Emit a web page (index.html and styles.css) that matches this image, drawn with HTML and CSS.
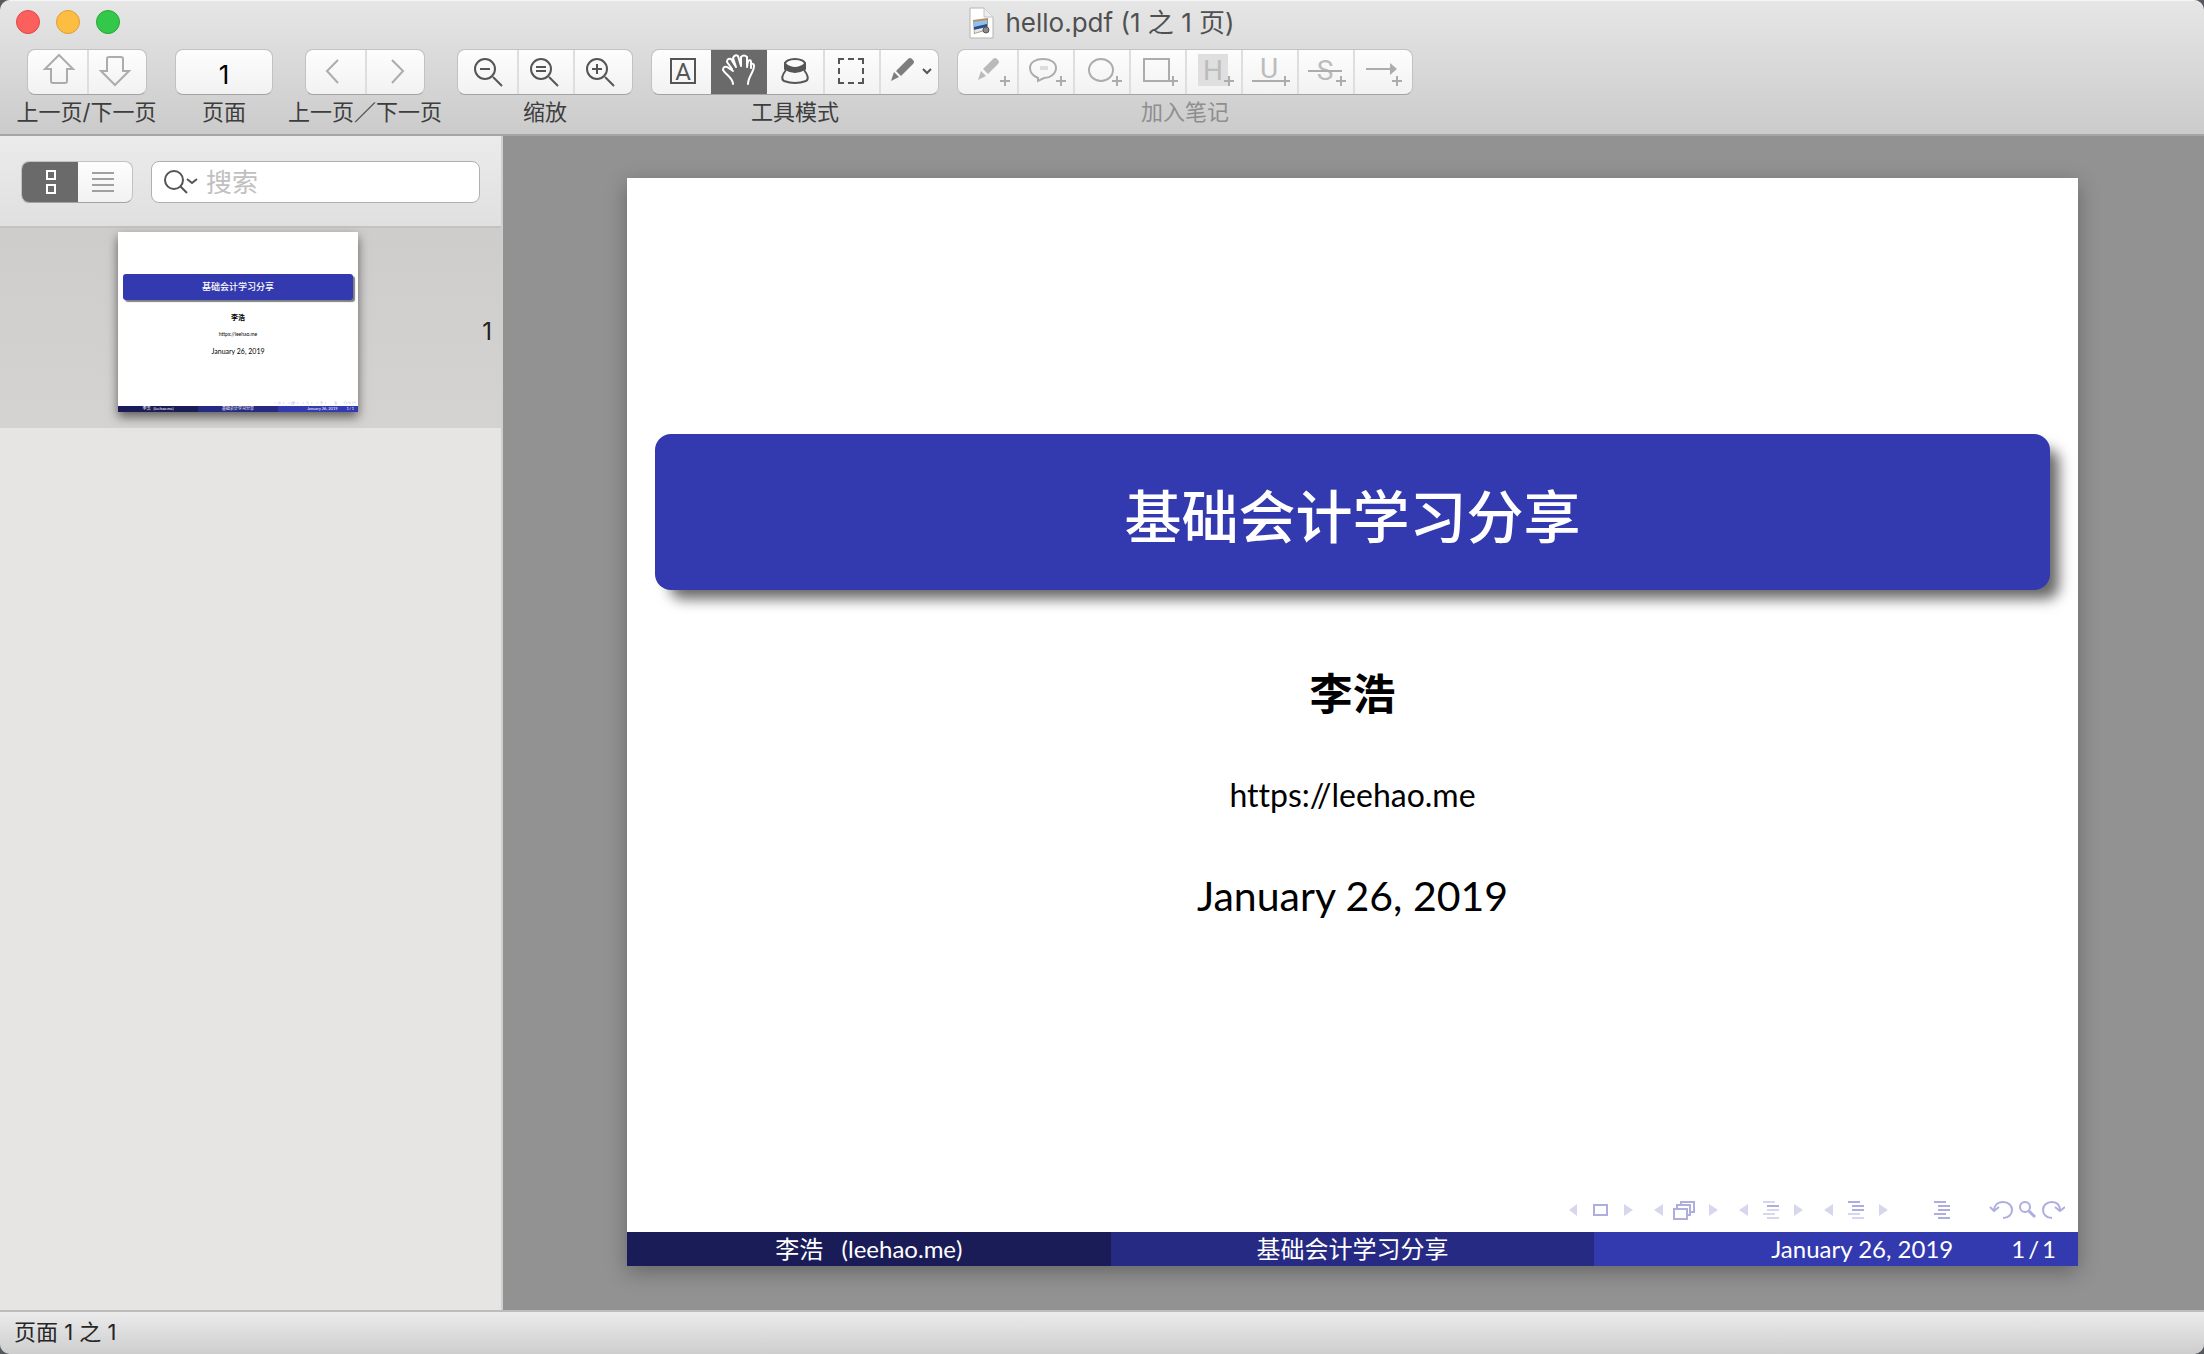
FILE: index.html
```html
<!DOCTYPE html>
<html lang="zh-CN">
<head>
<meta charset="utf-8">
<title>hello.pdf</title>
<link rel="stylesheet" href="styles.css">
</head>
<body>
<div class="window">
  <header class="chrome">
    <div class="titlebar">
      <div class="lights">
        <button class="light light-close" aria-label="关闭"></button>
        <button class="light light-min" aria-label="最小化"></button>
        <button class="light light-zoom" aria-label="缩放窗口"></button>
      </div>
      <h1 class="title">
        <svg width="26" height="32" viewBox="0 0 26 32"><path d="M1 1h14l9 9v21H1z" fill="#fff" stroke="#b4b4b4"/><path d="M15 1v9h9" fill="#eee" stroke="#c4c4c4"/><path d="M4 13l15-2v12l-14 4z" fill="#b98d62"/><path d="M4 15l14-2v5l-13 3z" fill="#8fc1ee"/><path d="M5 20l13-3v3l-13 3z" fill="#2c4a8c"/><path d="M5 23l13-3v2l-12 4z" fill="#dfe8f0"/><circle cx="17" cy="23" r="3" fill="#8a8a8a" stroke="#555"/></svg>
        <span>hello.pdf (1 之 1 页)</span>
      </h1>
    </div>
    <div class="toolbar">
      <div class="tool tool-pages">
        <div class="segments">
          <button disabled aria-label="上一页"><svg width="60" height="46"><path d="M32 6 46 20H40V32q0 2-2 2H26q-2 0-2-2V20H18Z"/></svg></button>
          <button disabled aria-label="下一页"><svg width="60" height="46"><path d="M28 36 42 22H36V10q0-2-2-2H22q-2 0-2 2V22H14Z"/></svg></button>
        </div>
        <span class="caption">上一页/下一页</span>
      </div>
      <div class="tool">
        <input class="page-input" id="page" value="1">
        <label class="caption" for="page">页面</label>
      </div>
      <div class="tool tool-history">
        <div class="segments">
          <button disabled aria-label="后退"><svg width="60" height="46"><path d="M33 11 22 22 33 34"/></svg></button>
          <button disabled aria-label="前进"><svg width="60" height="46"><path d="M27 11 38 22 27 34"/></svg></button>
        </div>
        <span class="caption">上一页／下一页</span>
      </div>
      <div class="tool">
        <div class="segments">
          <button aria-label="缩小"><svg width="60" height="46"><circle cx="28" cy="20" r="10"/><path d="M36 28 45 37M23 20h10"/></svg></button>
          <button aria-label="实际大小"><svg width="56" height="46"><circle cx="24" cy="20" r="10"/><path d="M32 28 41 37M19 18h10M19 22h10"/></svg></button>
          <button aria-label="放大"><svg width="60" height="46"><circle cx="24" cy="20" r="10"/><path d="M32 28 41 37M19 20h10M24 15v10"/></svg></button>
        </div>
        <span class="caption">缩放</span>
      </div>
      <div class="tool">
        <div class="segments">
          <button aria-label="文本工具"><svg width="60" height="46"><path d="M20 10h24v24H20z"/><text x="32" y="31" class="glyph">A</text></svg></button>
          <button class="on" aria-label="滚动工具"><svg width="56" height="46" stroke-linecap="round"><path d="M22 35C22 29 15 26 12 21q0-4 4-3l6 4M21 20 16 13q0-4 4-3l5 8M25 18 22 9q2-4 5-2l3 10M30 17V8q3-3 6 0v9M36 18l1-6q3-2 3 1v6M40 15q3-1 3 2c0 6-6 11-6 18"/></svg></button>
          <button aria-label="放大镜工具"><svg width="56" height="46"><ellipse cx="28" cy="15" rx="10" ry="5"/><path d="M18 15v5q10 6 20 0v-5q-10 8-20 0z" fill="#555"/><path d="M19 21c-4 5-5 9-2 11q11 4 22 0c3-2 2-6-2-11"/></svg></button>
          <button aria-label="选择工具"><svg width="56" height="46"><path d="M16 15v-5h5M25 10h6M35 10h5v5M40 19v6M40 29v5h-5M31 34h-6M21 34h-5v-5M16 25v-6"/></svg></button>
          <button aria-label="笔记工具"><svg width="60" height="46"><g class="pen"><path d="M17 22 29 10q2-2 4 0l1 1q2 2 0 4L22 27z"/><path d="M15 23l5 5-8 4z"/></g><path d="M44 20l4 4 4-4"/></svg></button>
        </div>
        <span class="caption">工具模式</span>
      </div>
      <div class="tool tool-off">
        <div class="segments">
          <button disabled aria-label="手绘"><svg width="60" height="46"><g class="pen"><path d="M26 20 36 10q2-2 4 0l1 1q2 2 0 4L31 25z"/><path d="M24 22l5 5-8 4z"/></g><path d="M43 32h10M48 27v10"/></svg></button>
          <button disabled aria-label="批注"><svg width="56" height="46"><path d="M21 29c-5-2-8-5-8-10 0-6 6-9 13-9s13 3 13 9-6 10-12 10l-6 3z"/><path d="M23 19h8" class="faint"/><path d="M39 32h10M44 27v10"/></svg></button>
          <button disabled aria-label="椭圆"><svg width="56" height="46"><ellipse cx="28" cy="21" rx="12" ry="11"/><path d="M39 32h10M44 27v10"/></svg></button>
          <button disabled aria-label="矩形"><svg width="56" height="46"><path d="M15 10h25v22H15z"/><path d="M39 32h10M44 27v10"/></svg></button>
          <button disabled aria-label="高亮"><svg width="56" height="46"><path class="shade" d="M13 5h30v32H13z"/><text x="28" y="31" class="glyph glyph-big">H</text><path d="M39 32h10M44 27v10"/></svg></button>
          <button disabled aria-label="下划线"><svg width="56" height="46"><text x="28" y="29" class="glyph glyph-big">U</text><path d="M11 32h38M44 27v10"/></svg></button>
          <button disabled aria-label="删除线"><svg width="56" height="46"><text x="28" y="31" class="glyph glyph-big">S</text><path d="M11 22h34M39 32h10M44 27v10"/></svg></button>
          <button disabled aria-label="箭头"><svg width="60" height="46"><path d="M13 20h26"/><path d="M37 14l7 6-7 6z" class="solid"/><path d="M39 32h10M44 27v10"/></svg></button>
        </div>
        <span class="caption">加入笔记</span>
      </div>
    </div>
  </header>

  <main class="body">
    <aside class="sidebar">
      <div class="sidebar-head">
        <div class="segments segments-small">
          <button class="on" aria-label="缩略图"><svg width="57" height="42"><path d="M26 10h8v8h-8zM26 24h8v8h-8z"/></svg></button>
          <button aria-label="目录"><svg width="55" height="42"><path class="lines" d="M14 12h22M14 18h22M14 24h22M14 30h22"/></svg></button>
        </div>
        <label class="search">
          <svg width="34" height="26" viewBox="0 0 34 26"><circle cx="10" cy="11" r="9"/><path d="M16 17 23 24M23 10l5 4 5-4"/></svg>
          <input type="search" placeholder="搜索" aria-label="搜索">
        </label>
      </div>
      <div class="thumb-row">
        <article class="slide slide-thumb">
          <div class="banner">基础会计学习分享</div>
          <p class="author">李浩</p>
          <p class="link">https://leehao.me</p>
          <p class="date">January 26, 2019</p>
          <div class="nav"><svg width="82" height="4" viewBox="0 0 496 24"><use href="#beamer-nav"/></svg></div>
          <footer class="foot"><span>李浩&nbsp;&nbsp; (leehao.me)</span><span>基础会计学习分享</span><span class="foot-date"><span>January 26, 2019</span><span>1&thinsp;/&thinsp;1</span></span></footer>
        </article>
        <span class="thumb-number">1</span>
      </div>
    </aside>

    <section class="viewer">
      <article class="slide slide-full">
        <h2 class="banner">基础会计学习分享</h2>
        <p class="author">李浩</p>
        <p class="link"><a href="https://leehao.me">https://leehao.me</a></p>
        <p class="date">January 26, 2019</p>
        <div class="nav">
          <svg width="496" height="24" viewBox="0 0 496 24">
            <g id="beamer-nav" fill="none" stroke="#adadde" stroke-width="2">
              <path fill="#d6d6ef" stroke="none" d="M8 6v12L0 12zM55 6v12l9-6zM94 6v12l-9-6zM140 6v12l9-6zM179 6v12l-9-6zM225 6v12l9-6zM264 6v12l-9-6zM310 6v12l9-6z"/>
              <path d="M25 7h13v10H25zM105 11h13v10h-13zM108 10V7h13v10h-3M112 6V4h13v10h-4"/>
              <path stroke="#d6d6ef" d="M194 4h12M198 12h12M194 16h12M198 20h12M279 16h12M283 20h12"/>
              <path d="M198 8h12M279 4h12M283 8h12M283 12h12M365 4h12M369 8h12M369 12h12M365 16h12M369 20h12"/>
              <path d="M434 20c6 0 9-4 9-8s-3-8-9-8-9 4-9 9M421 9l4 4 5-4"/>
              <circle cx="456" cy="9" r="5"/><path d="M460 13l6 6" stroke-width="3"/>
              <path d="M483 20c-6 0-9-4-9-8s3-8 9-8 8 4 8 9M486 9l5 4 5-4"/>
            </g>
          </svg>
        </div>
        <footer class="foot"><span>李浩&nbsp;&nbsp; (leehao.me)</span><span>基础会计学习分享</span><span class="foot-date"><span>January 26, 2019</span><span>1&thinsp;/&thinsp;1</span></span></footer>
      </article>
    </section>
  </main>

  <footer class="status">页面 1 之 1</footer>
</div>
</body>
</html>
```
FILE: styles.css
```css
* { box-sizing: border-box; }
html, body { height: 100%; }
body {
  margin: 0;
  background: #55585c;
  color: #3d3d3d;
  font: 22px/30px Inter, "Noto Sans CJK SC", sans-serif;
}
button, input { font: inherit; color: inherit; margin: 0; padding: 0; border: 0; }
h1, h2, p { margin: 0; font-weight: 400; }

.window {
  min-height: 100%;
  display: flex;
  flex-direction: column;
  overflow: hidden;
  border-radius: 10px;
  background: #929292;
}

/* Title bar and toolbar */
.chrome {
  height: 136px;
  background: linear-gradient(#e6e6e6, #cbcbcb);
  border-top: 1px solid #f5f5f5;
  border-bottom: 2px solid #a6a6a6;
}
.titlebar {
  height: 48px;
  display: grid;
  grid-template-columns: 1fr auto 1fr;
  align-items: start;
}
.lights { display: flex; gap: 16px; padding: 9px 16px; }
.light { width: 24px; height: 24px; border-radius: 50%; border: 1px solid; }
.light-close { background: #fc605c; border-color: #df4744; }
.light-min { background: #fdbd41; border-color: #de9f34; }
.light-zoom { background: #34c84a; border-color: #24a732; }
.title {
  display: flex;
  align-items: center;
  gap: 10px;
  padding-top: 5px;
  font-size: 26px;
  line-height: 34px;
  color: #505050;
}
.toolbar { display: flex; gap: 18px; padding-left: 16px; }
.tool { display: flex; flex-direction: column; align-items: center; gap: 2px; }
.tool-pages { width: 141px; }
.tool-history { width: 148px; }
.caption { white-space: nowrap; line-height: 30px; }
.tool-off .caption { color: #8e8e8e; }

.segments {
  flex: none;
  display: flex;
  border: 1px solid #c2c2c2;
  border-bottom-color: #a3a3a3;
  border-radius: 8px;
  background: linear-gradient(#fdfdfd, #f2f2f2);
  overflow: hidden;
}
.segments button { display: flex; background: none; margin: -1px 0; }
.segments button:first-child { margin-left: -1px; }
.segments button:last-child { margin-right: -1px; }
.segments button + button { box-shadow: inset 2px 0 #dedede; }
.segments .on { background: #6a6a6a; }
.segments .on + button, .segments button.on { box-shadow: none; }
.segments svg { fill: none; stroke: #555; stroke-width: 2; }
.segments button:disabled svg { stroke: #acacac; }
.segments .on svg { stroke: #fff; }
.pen { fill: #7d7d7d; stroke: none; }
button:disabled .pen { fill: #bababa; }
.solid { fill: #acacac; stroke: none; }
.faint { stroke: #dcdcdc; stroke-width: 4; }
.shade { fill: #dfdfdf; stroke: none; }
.glyph { font: 24px Roboto, sans-serif; text-anchor: middle; fill: #555; stroke: none; }
.glyph-big { font-size: 28px; fill: #bcbcbc; }
.segments .lines { stroke: #a0a0a0; }

.page-input {
  width: 98px;
  height: 46px;
  padding-top: 4px;
  border: 1px solid #c2c2c2;
  border-bottom-color: #a3a3a3;
  border-radius: 8px;
  background: linear-gradient(#fdfdfd, #f2f2f2);
  color: #000;
  font-size: 26px;
  text-align: center;
}

/* Sidebar */
.body { flex: 1; display: flex; }
.sidebar {
  width: 503px;
  flex: none;
  background: #e6e5e3;
  border-right: 2px solid #cfcfcf;
}
.sidebar-head {
  height: 92px;
  display: flex;
  gap: 18px;
  align-items: flex-start;
  padding: 25px 21px;
  background: linear-gradient(#ebebeb, #e0e0e0);
  border-bottom: 2px solid #c4c3c2;
}
.search {
  flex: 1;
  min-width: 0;
  height: 42px;
  display: flex;
  align-items: center;
  gap: 8px;
  padding: 0 12px;
  border: 1px solid #b0b0b0;
  border-radius: 8px;
  background: #fff;
}
.search svg { flex: none; fill: none; stroke: #555; stroke-width: 2; }
.search input { flex: 1; min-width: 0; height: 38px; background: none; outline: 0; font-size: 26px; }
.search input::placeholder { color: #c0c0c0; }
.thumb-row {
  height: 200px;
  display: flex;
  align-items: center;
  justify-content: space-between;
  padding: 4px 9px 16px 118px;
  background: linear-gradient(#cfcdcb, #d5d3d1);
}
.thumb-number { padding-top: 20px; font-size: 24px; color: #222; }

/* Slide, shared by the page and its thumbnail */
.slide {
  display: flex;
  flex-direction: column;
  aspect-ratio: 4 / 3;
  background: #fff;
  color: #000;
  font-family: Lato, "Noto Sans CJK SC", sans-serif;
  font-variant-ligatures: none;
  text-align: center;
}
.slide a { color: inherit; text-decoration: none; }
.banner {
  display: flex;
  align-items: center;
  justify-content: center;
  background: #3339ae;
  color: #fff;
  font-weight: 500;
}
.author { font-weight: 700; }
.nav { display: flex; justify-content: flex-end; margin-top: auto; }
.foot { display: grid; grid-template-columns: 1fr 1fr 1fr; color: #fff; white-space: nowrap; }
.foot > :nth-child(1) { background: #1a1c57; }
.foot > :nth-child(2) { background: #262a83; }
.foot > :nth-child(3) { background: #3339ae; }
.foot .foot-date { display: flex; justify-content: flex-end; }

.viewer {
  flex: 1;
  padding: 42px 126px 43px 124px;
  background: #929292;
}
.slide-full { box-shadow: 0 6px 20px rgba(0, 0, 0, .3); }
.slide-full .banner {
  height: 156px;
  margin: 256px 28px 0;
  padding-top: 8px;
  border-radius: 16px;
  box-shadow: 12px 12px 14px -3px rgba(0, 0, 0, .6);
  font-size: 57px;
}
.slide-full .author { margin-top: 74px; font-size: 43px; line-height: 60px; }
.slide-full .link { margin-top: 52px; font-size: 32px; line-height: 38px; }
.slide-full .date { margin-top: 52px; font-size: 41px; line-height: 60px; }
.slide-full .nav { padding: 0 13px 10px; }
.slide-full .foot { font-size: 24px; line-height: 34px; }
.slide-full .foot-date { gap: 58px; padding-right: 22px; }

.slide-thumb {
  width: 240px;
  flex: none;
  box-shadow: 0 5px 10px rgba(0, 0, 0, .55);
}
.slide-thumb .banner {
  height: 26px;
  margin: 42px 5px 0;
  border-radius: 3px;
  box-shadow: 2px 2px 1px rgba(0, 0, 0, .5);
  font-size: 9px;
}
.slide-thumb .author { margin-top: 12px; font-size: 7px; line-height: 10px; }
.slide-thumb .link { margin-top: 8px; font-size: 5px; line-height: 8px; }
.slide-thumb .date { margin-top: 8px; font-size: 7px; line-height: 10px; }
.slide-thumb .nav { padding: 0 2px 1px; }
.slide-thumb .foot { font-size: 4px; line-height: 6px; }
.slide-thumb .foot-date { gap: 9px; padding-right: 4px; }

.status {
  height: 44px;
  padding: 5px 14px;
  border-top: 2px solid #bcbcbc;
  background: linear-gradient(#ebebeb, #cecece);
  color: #262626;
}
```
